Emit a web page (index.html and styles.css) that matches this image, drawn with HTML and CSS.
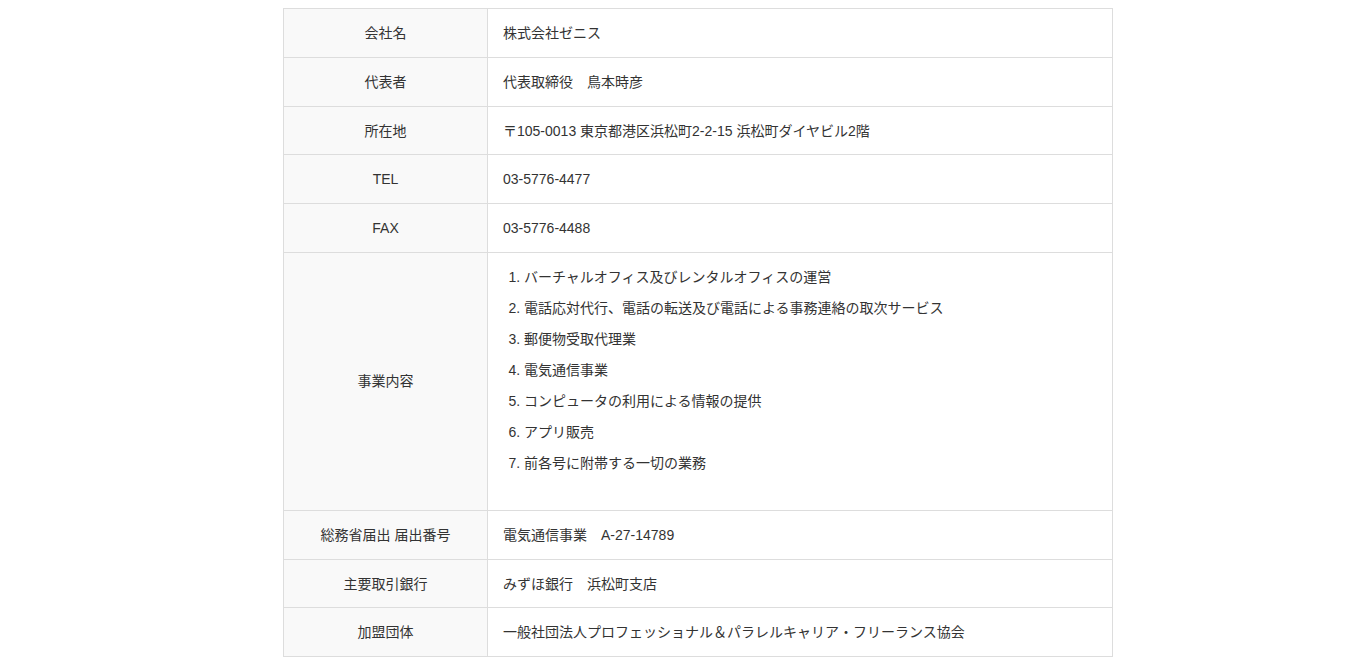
FILE: index.html
```html
<!DOCTYPE html>
<html lang="ja">
<head>
<meta charset="utf-8">
<title>会社概要</title>
<link rel="stylesheet" href="styles.css">
</head>
<body>
<div class="page">
  <table class="company">
    <tbody>
      <tr><th>会社名</th><td>株式会社ゼニス</td></tr>
      <tr><th>代表者</th><td>代表取締役　鳥本時彦</td></tr>
      <tr><th>所在地</th><td>〒105-0013 東京都港区浜松町2-2-15 浜松町ダイヤビル2階</td></tr>
      <tr><th>TEL</th><td>03-5776-4477</td></tr>
      <tr><th>FAX</th><td>03-5776-4488</td></tr>
      <tr>
        <th>事業内容</th>
        <td class="biz-cell">
          <ol class="biz">
            <li>バーチャルオフィス及びレンタルオフィスの運営</li>
            <li>電話応対代行、電話の転送及び電話による事務連絡の取次サービス</li>
            <li>郵便物受取代理業</li>
            <li>電気通信事業</li>
            <li>コンピュータの利用による情報の提供</li>
            <li>アプリ販売</li>
            <li>前各号に附帯する一切の業務</li>
          </ol>
        </td>
      </tr>
      <tr><th>総務省届出 届出番号</th><td>電気通信事業　A-27-14789</td></tr>
      <tr><th>主要取引銀行</th><td>みずほ銀行　浜松町支店</td></tr>
      <tr><th>加盟団体</th><td>一般社団法人プロフェッショナル＆パラレルキャリア・フリーランス協会</td></tr>
    </tbody>
  </table>
</div>
</body>
</html>
```
FILE: styles.css
```css
html, body {
  margin: 0;
  padding: 0;
  background: #fff;
}
body {
  font-family: "Liberation Sans", Arial, "Noto Sans CJK JP", sans-serif;
  font-size: 14px;
  color: #333;
}
.page {
  padding: 8px 0 0 283px;
}
.company {
  width: 830px;
  border-collapse: collapse;
  border: 1px solid #ddd;
}
.company th,
.company td {
  border: 1px solid #ddd;
  padding: 16px 15px 14px;
  line-height: 17.75px;
  font-weight: normal;
  vertical-align: middle;
  text-align: left;
}
.company th {
  width: 173px;
  background: #f9f9f9;
  text-align: center;
}
.company td.biz-cell {
  padding-top: 14px;
}
.biz {
  margin: 0;
  padding: 0 0 12px 21px;
}
.biz li {
  line-height: 21px;
  margin-bottom: 10px;
}
```
